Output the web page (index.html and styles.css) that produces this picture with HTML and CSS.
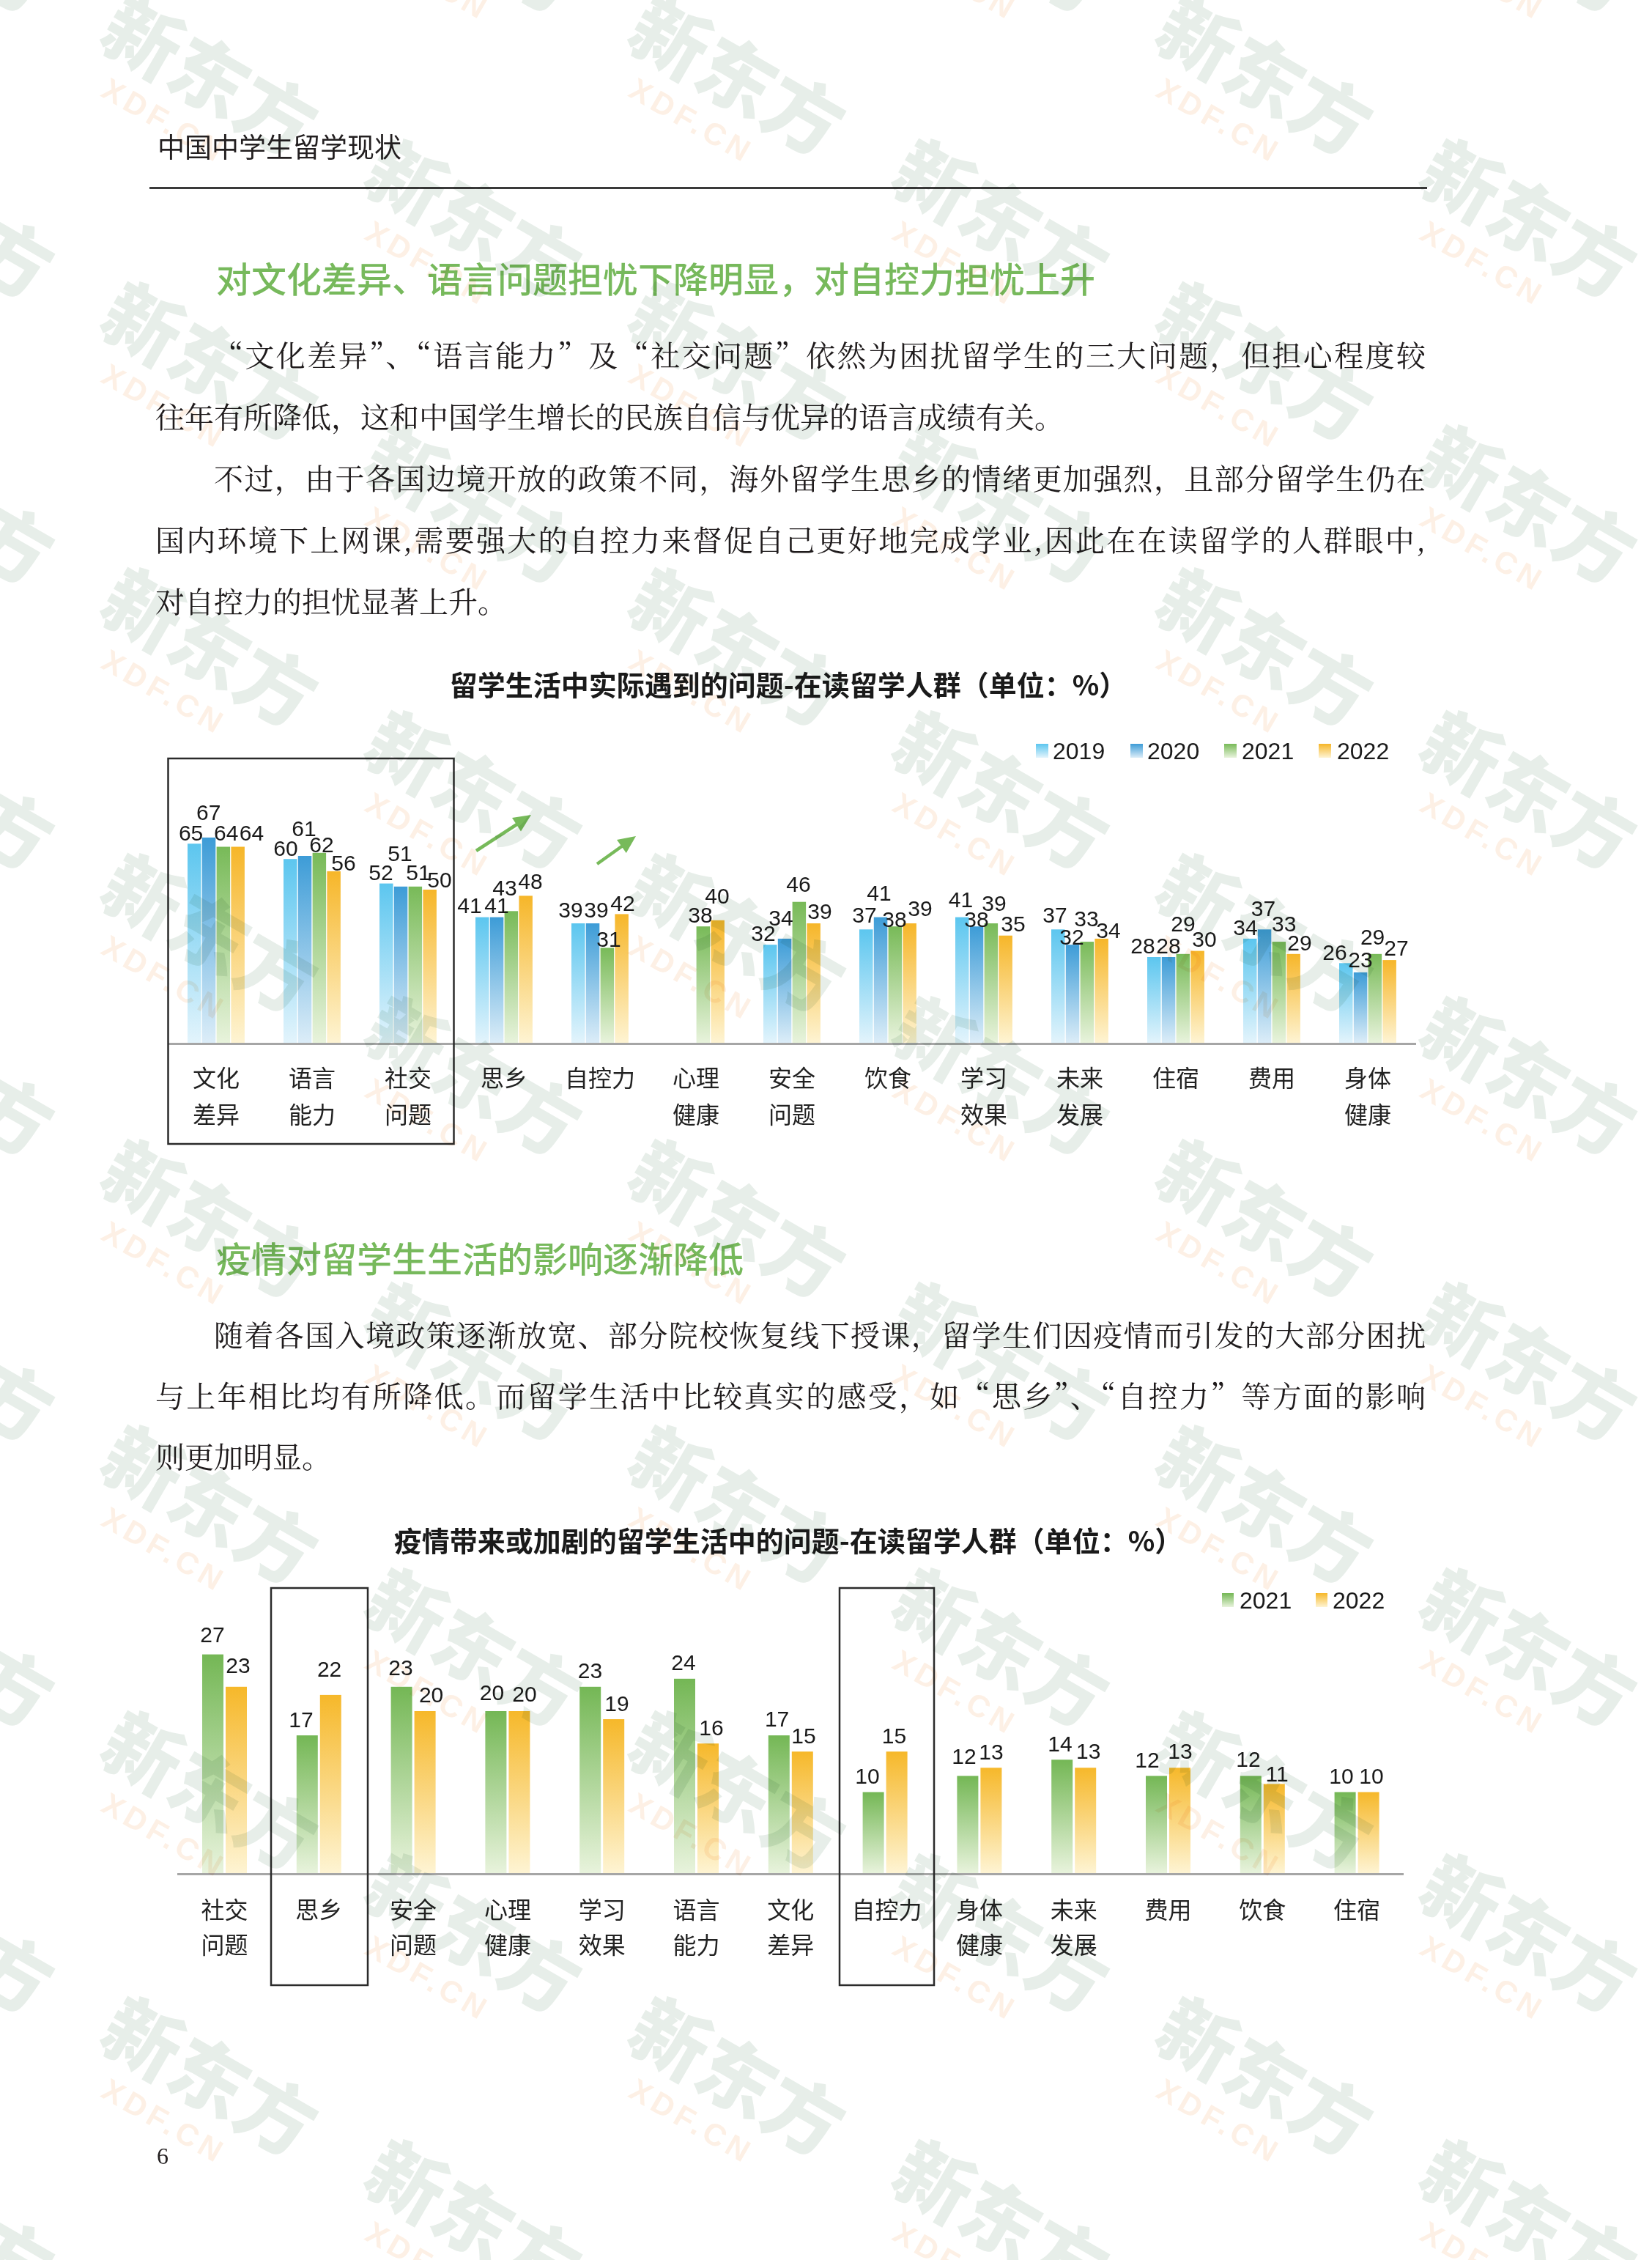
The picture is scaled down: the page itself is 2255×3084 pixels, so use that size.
FILE: index.html
```html
<!DOCTYPE html>
<html lang="zh-CN">
<head>
<meta charset="utf-8">
<title>中国中学生留学现状</title>
<link rel="stylesheet" href="styles.css">
</head>
<body>
<div class="page">
  <header class="running-head">中国中学生留学现状</header>
  <div class="rule"></div>

  <h2 class="sec-title">对文化差异、语言问题担忧下降明显，对自控力担忧上升</h2>
  <div class="para">
    <div class="ln first">“文化差异”、“语言能力”及“社交问题”依然为困扰留学生的三大问题，但担心程度较</div>
    <div class="ln last">往年有所降低，这和中国学生增长的民族自信与优异的语言成绩有关。</div>
  </div>
  <div class="para">
    <div class="ln first">不过，由于各国边境开放的政策不同，海外留学生思乡的情绪更加强烈，且部分留学生仍在</div>
    <div class="ln">国内环境下上网课,需要强大的自控力来督促自己更好地完成学业,因此在在读留学的人群眼中,</div>
    <div class="ln last">对自控力的担忧显著上升。</div>
  </div>

  <h3 class="chart-title">留学生活中实际遇到的问题-在读留学人群（单位：%）</h3>
  <svg class="chart" width="1740" height="580" viewBox="206 1000 1740 580">
    <defs>
      <linearGradient id="c19" x1="0" y1="0" x2="0" y2="1"><stop offset="0" stop-color="#5cc6ef"/><stop offset="1" stop-color="#e3f4fc"/></linearGradient>
      <linearGradient id="c20" x1="0" y1="0" x2="0" y2="1"><stop offset="0" stop-color="#3d9cd7"/><stop offset="1" stop-color="#dcedf8"/></linearGradient>
      <linearGradient id="c21" x1="0" y1="0" x2="0" y2="1"><stop offset="0" stop-color="#78ba58"/><stop offset="1" stop-color="#e8f3dc"/></linearGradient>
      <linearGradient id="c22" x1="0" y1="0" x2="0" y2="1"><stop offset="0" stop-color="#f6b629"/><stop offset="1" stop-color="#fef4d3"/></linearGradient>
    </defs>
    <!-- legend -->
    <rect x="1414" y="1014" width="17" height="19" fill="url(#c19)"/>
    <text class="leg" x="1437" y="1035">2019</text>
    <rect x="1543" y="1014" width="17" height="19" fill="url(#c20)"/>
    <text class="leg" x="1566" y="1035">2020</text>
    <rect x="1671" y="1014" width="17" height="19" fill="url(#c21)"/>
    <text class="leg" x="1695" y="1035">2021</text>
    <rect x="1800" y="1014" width="17" height="19" fill="url(#c22)"/>
    <text class="leg" x="1825" y="1035">2022</text>

    <!-- 2019 -->
    <g fill="url(#c19)">
      <rect x="256" y="1150.3" width="18.5" height="271.7"/>
      <rect x="387" y="1171.2" width="18.5" height="250.8"/>
      <rect x="518" y="1204.6" width="18.5" height="217.4"/>
      <rect x="649" y="1250.6" width="18.5" height="171.4"/>
      <rect x="780" y="1259" width="18.5" height="163"/>
      <rect x="1042" y="1288.2" width="18.5" height="133.8"/>
      <rect x="1173" y="1267.3" width="18.5" height="154.7"/>
      <rect x="1304" y="1250.6" width="18.5" height="171.4"/>
      <rect x="1435" y="1267.3" width="18.5" height="154.7"/>
      <rect x="1566" y="1305" width="18.5" height="117"/>
      <rect x="1697" y="1279.9" width="18.5" height="142.1"/>
      <rect x="1828" y="1313.3" width="18.5" height="108.7"/>
    </g>
    <!-- 2020 -->
    <g fill="url(#c20)">
      <rect x="275.8" y="1141.9" width="18.5" height="280.1"/>
      <rect x="406.8" y="1167" width="18.5" height="255"/>
      <rect x="537.8" y="1208.8" width="18.5" height="213.2"/>
      <rect x="668.8" y="1250.6" width="18.5" height="171.4"/>
      <rect x="799.8" y="1259" width="18.5" height="163"/>
      <rect x="1061.8" y="1279.9" width="18.5" height="142.1"/>
      <rect x="1192.8" y="1250.6" width="18.5" height="171.4"/>
      <rect x="1323.8" y="1263.2" width="18.5" height="158.8"/>
      <rect x="1454.8" y="1288.2" width="18.5" height="133.8"/>
      <rect x="1585.8" y="1305" width="18.5" height="117"/>
      <rect x="1716.8" y="1267.3" width="18.5" height="154.7"/>
      <rect x="1847.8" y="1325.9" width="18.5" height="96.1"/>
    </g>
    <!-- 2021 -->
    <g fill="url(#c21)">
      <rect x="295.6" y="1154.5" width="18.5" height="267.5"/>
      <rect x="426.6" y="1162.8" width="18.5" height="259.2"/>
      <rect x="557.6" y="1208.8" width="18.5" height="213.2"/>
      <rect x="688.6" y="1242.3" width="18.5" height="179.7"/>
      <rect x="819.6" y="1292.4" width="18.5" height="129.6"/>
      <rect x="950.6" y="1263.2" width="18.5" height="158.8"/>
      <rect x="1081.6" y="1229.7" width="18.5" height="192.3"/>
      <rect x="1212.6" y="1263.2" width="18.5" height="158.8"/>
      <rect x="1343.6" y="1259" width="18.5" height="163"/>
      <rect x="1474.6" y="1284.1" width="18.5" height="137.9"/>
      <rect x="1605.6" y="1300.8" width="18.5" height="121.2"/>
      <rect x="1736.6" y="1284.1" width="18.5" height="137.9"/>
      <rect x="1867.6" y="1300.8" width="18.5" height="121.2"/>
    </g>
    <!-- 2022 -->
    <g fill="url(#c22)">
      <rect x="315.4" y="1154.5" width="18.5" height="267.5"/>
      <rect x="446.4" y="1187.9" width="18.5" height="234.1"/>
      <rect x="577.4" y="1213" width="18.5" height="209"/>
      <rect x="708.4" y="1221.4" width="18.5" height="200.6"/>
      <rect x="839.4" y="1246.4" width="18.5" height="175.6"/>
      <rect x="970.4" y="1254.8" width="18.5" height="167.2"/>
      <rect x="1101.4" y="1259" width="18.5" height="163"/>
      <rect x="1232.4" y="1259" width="18.5" height="163"/>
      <rect x="1363.4" y="1275.7" width="18.5" height="146.3"/>
      <rect x="1494.4" y="1279.9" width="18.5" height="142.1"/>
      <rect x="1625.4" y="1296.6" width="18.5" height="125.4"/>
      <rect x="1756.4" y="1300.8" width="18.5" height="121.2"/>
      <rect x="1887.4" y="1309.1" width="18.5" height="112.9"/>
    </g>

    <line class="axis" x1="229" y1="1423.5" x2="1933" y2="1423.5"/>
    <rect class="frame" x="229.5" y="1034" width="390" height="526"/>

    <!-- arrows -->
    <g class="arrow">
      <line x1="650" y1="1160" x2="707" y2="1123"/>
      <polygon points="725,1111 711,1133.4 699,1115"/>
      <line x1="815" y1="1178" x2="850" y2="1153"/>
      <polygon points="868,1140 854.8,1162.9 842,1144.9"/>
    </g>

    <!-- data labels -->
    <g class="num">
      <text x="260.6" y="1146">65</text><text x="284.8" y="1118">67</text><text x="308.7" y="1146">64</text><text x="343.5" y="1146">64</text>
      <text x="390" y="1167">60</text><text x="415" y="1139.5">61</text><text x="439" y="1162">62</text><text x="469" y="1187">56</text>
      <text x="520" y="1199.6">52</text><text x="546" y="1174">51</text><text x="571" y="1199.6">51</text><text x="600" y="1210">50</text>
      <text x="641" y="1245">41</text><text x="678" y="1245">41</text><text x="689" y="1220.6">43</text><text x="724" y="1212">48</text>
      <text x="779" y="1250.5">39</text><text x="814" y="1250.5">39</text><text x="831" y="1291">31</text><text x="850" y="1241.7">42</text>
      <text x="956" y="1257.7">38</text><text x="979" y="1232">40</text>
      <text x="1042" y="1283">32</text><text x="1066" y="1261.6">34</text><text x="1090" y="1216">46</text><text x="1119" y="1253">39</text>
      <text x="1180" y="1257.7">37</text><text x="1200" y="1228">41</text><text x="1221" y="1263.5">38</text><text x="1256" y="1249">39</text>
      <text x="1311.5" y="1237">41</text><text x="1333" y="1263.5">38</text><text x="1357" y="1241.7">39</text><text x="1383" y="1270">35</text>
      <text x="1440" y="1257.7">37</text><text x="1463" y="1287.6">32</text><text x="1483" y="1262.7">33</text><text x="1513" y="1278.8">34</text>
      <text x="1560" y="1300">28</text><text x="1595" y="1300">28</text><text x="1615" y="1270">29</text><text x="1644" y="1291">30</text>
      <text x="1700" y="1275">34</text><text x="1724.5" y="1249">37</text><text x="1752.7" y="1270">33</text><text x="1774" y="1296">29</text>
      <text x="1822" y="1308.6">26</text><text x="1857" y="1319">23</text><text x="1873.6" y="1287.6">29</text><text x="1906" y="1303">27</text>
    </g>

    <!-- categories -->
    <g class="cat">
      <text x="295" y="1468">文化</text><text x="295" y="1518">差异</text>
      <text x="426" y="1468">语言</text><text x="426" y="1518">能力</text>
      <text x="557" y="1468">社交</text><text x="557" y="1518">问题</text>
      <text x="688" y="1468">思乡</text>
      <text x="819" y="1468">自控力</text>
      <text x="950" y="1468">心理</text><text x="950" y="1518">健康</text>
      <text x="1081" y="1468">安全</text><text x="1081" y="1518">问题</text>
      <text x="1212" y="1468">饮食</text>
      <text x="1343" y="1468">学习</text><text x="1343" y="1518">效果</text>
      <text x="1474" y="1468">未来</text><text x="1474" y="1518">发展</text>
      <text x="1605" y="1468">住宿</text>
      <text x="1736" y="1468">费用</text>
      <text x="1867" y="1468">身体</text><text x="1867" y="1518">健康</text>
    </g>
  </svg>

  <h2 class="sec-title second">疫情对留学生生活的影响逐渐降低</h2>
  <div class="para tight">
    <div class="ln first">随着各国入境政策逐渐放宽、部分院校恢复线下授课，留学生们因疫情而引发的大部分困扰</div>
    <div class="ln">与上年相比均有所降低。而留学生活中比较真实的感受，如“思乡”、“自控力”等方面的影响</div>
    <div class="ln last">则更加明显。</div>
  </div>

  <h3 class="chart-title second">疫情带来或加剧的留学生活中的问题-在读留学人群（单位：%）</h3>
  <svg class="chart chart2" width="1740" height="580" viewBox="206 2140 1740 580">
    <defs>
      <linearGradient id="d21" x1="0" y1="0" x2="0" y2="1"><stop offset="0" stop-color="#74b755"/><stop offset="1" stop-color="#e8f3dc"/></linearGradient>
      <linearGradient id="d22" x1="0" y1="0" x2="0" y2="1"><stop offset="0" stop-color="#f6b82a"/><stop offset="1" stop-color="#fef4d3"/></linearGradient>
    </defs>
    <rect x="1668" y="2173" width="16" height="19" fill="url(#d21)"/>
    <text class="leg" x="1692" y="2194">2021</text>
    <rect x="1796" y="2173" width="16" height="19" fill="url(#d22)"/>
    <text class="leg" x="1819" y="2194">2022</text>

    <g fill="url(#d21)">
      <rect x="276" y="2256.6" width="29" height="298.4"/>
      <rect x="404.8" y="2367.1" width="29" height="187.9"/>
      <rect x="533.6" y="2300.8" width="29" height="254.2"/>
      <rect x="662.4" y="2334" width="29" height="221"/>
      <rect x="791.2" y="2300.8" width="29" height="254.2"/>
      <rect x="920" y="2289.8" width="29" height="265.2"/>
      <rect x="1048.8" y="2367.1" width="29" height="187.9"/>
      <rect x="1177.6" y="2444.5" width="29" height="110.5"/>
      <rect x="1306.4" y="2422.4" width="29" height="132.6"/>
      <rect x="1435.2" y="2400.3" width="29" height="154.7"/>
      <rect x="1564" y="2422.4" width="29" height="132.6"/>
      <rect x="1692.8" y="2422.4" width="29" height="132.6"/>
      <rect x="1821.6" y="2444.5" width="29" height="110.5"/>
    </g>
    <g fill="url(#d22)">
      <rect x="308" y="2300.8" width="29" height="254.2"/>
      <rect x="436.8" y="2311.9" width="29" height="243.1"/>
      <rect x="565.6" y="2334" width="29" height="221"/>
      <rect x="694.4" y="2334" width="29" height="221"/>
      <rect x="823.2" y="2345" width="29" height="210"/>
      <rect x="952" y="2378.2" width="29" height="176.8"/>
      <rect x="1080.8" y="2389.2" width="29" height="165.8"/>
      <rect x="1209.6" y="2389.2" width="29" height="165.8"/>
      <rect x="1338.4" y="2411.3" width="29" height="143.7"/>
      <rect x="1467.2" y="2411.3" width="29" height="143.7"/>
      <rect x="1596" y="2411.3" width="29" height="143.7"/>
      <rect x="1724.8" y="2433.4" width="29" height="121.6"/>
      <rect x="1853.6" y="2444.5" width="29" height="110.5"/>
    </g>

    <line class="axis" x1="242" y1="2556.5" x2="1916" y2="2556.5"/>
    <rect class="frame" x="370" y="2166" width="132" height="542"/>
    <rect class="frame" x="1146" y="2166" width="129" height="542"/>

    <g class="num">
      <text x="290" y="2239.7">27</text><text x="325" y="2282">23</text>
      <text x="411" y="2356">17</text><text x="449.6" y="2286.5">22</text>
      <text x="547" y="2285">23</text><text x="588.6" y="2322">20</text>
      <text x="671.5" y="2319">20</text><text x="716" y="2321">20</text>
      <text x="805.5" y="2288.7">23</text><text x="842" y="2334">19</text>
      <text x="933" y="2278">24</text><text x="971" y="2366.7">16</text>
      <text x="1060.6" y="2355">17</text><text x="1097" y="2377.6">15</text>
      <text x="1184" y="2433">10</text><text x="1220.5" y="2377.6">15</text>
      <text x="1316" y="2405.8">12</text><text x="1353" y="2400">13</text>
      <text x="1447" y="2389">14</text><text x="1485.8" y="2399">13</text>
      <text x="1566" y="2411">12</text><text x="1611" y="2399">13</text>
      <text x="1704" y="2410">12</text><text x="1743" y="2429.6">11</text>
      <text x="1831" y="2433">10</text><text x="1872" y="2433">10</text>
    </g>

    <g class="cat">
      <text x="306.5" y="2603">社交</text><text x="306.5" y="2651">问题</text>
      <text x="435.3" y="2603">思乡</text>
      <text x="564.1" y="2603">安全</text><text x="564.1" y="2651">问题</text>
      <text x="692.9" y="2603">心理</text><text x="692.9" y="2651">健康</text>
      <text x="821.7" y="2603">学习</text><text x="821.7" y="2651">效果</text>
      <text x="950.5" y="2603">语言</text><text x="950.5" y="2651">能力</text>
      <text x="1079.3" y="2603">文化</text><text x="1079.3" y="2651">差异</text>
      <text x="1210.5" y="2603">自控力</text>
      <text x="1336.9" y="2603">身体</text><text x="1336.9" y="2651">健康</text>
      <text x="1465.7" y="2603">未来</text><text x="1465.7" y="2651">发展</text>
      <text x="1594.5" y="2603">费用</text>
      <text x="1723.3" y="2603">饮食</text>
      <text x="1852.1" y="2603">住宿</text>
    </g>
  </svg>

  <div class="folio">6</div>
</div>

<svg class="wm" width="2255" height="3084" viewBox="0 0 2255 3084" aria-hidden="true">
  <defs>
    <g id="wmark">
      <g transform="rotate(30)">
        <text class="wm-cn" x="0" y="0">新东方</text>
        <text class="wm-en" x="40" y="58">XDF.CN</text>
      </g>
    </g>
    <pattern id="wmp" patternUnits="userSpaceOnUse" x="110" y="-30" width="720" height="390">
      <use href="#wmark" x="20" y="90"/>
      <use href="#wmark" x="380" y="285"/>
      <use href="#wmark" x="380" y="-105"/>
    </pattern>
  </defs>
  <rect width="2255" height="3084" fill="url(#wmp)"/>
</svg>
</body>
</html>
```

FILE: styles.css
```css
html, body {
  margin: 0;
  padding: 0;
  background: #ffffff;
}

body {
  position: relative;
  width: 2255px;
  min-height: 3084px;
  color: #231f20;
  font-family: "Noto Sans CJK SC", "Noto Sans", sans-serif;
}

.page {
  width: 1740px;
  margin-left: 206px;
  padding-top: 174px;
}

.running-head {
  font-family: "Noto Sans CJK SC", sans-serif;
  font-size: 37px;
  line-height: 50px;
  height: 50px;
  padding-left: 9px;
  color: #231f20;
}

.rule {
  margin-top: 31px;
  margin-left: -2px;
  width: 1744px;
  height: 3px;
  background: #3a3a3a;
}

.sec-title {
  margin: 88px 0 0 0;
  padding-left: 89px;
  font-family: "Noto Sans CJK SC", sans-serif;
  font-size: 48px;
  line-height: 64px;
  font-weight: 500;
  color: #77b95c;
}

.sec-title.second {
  margin-top: 102px;
}

.para {
  margin-top: 31px;
  font-family: "Noto Serif CJK SC", "Noto Sans CJK SC", serif;
  font-size: 40px;
  line-height: 84px;
  color: #1f1b1c;
}

.para + .para {
  margin-top: 0;
}

.para.tight {
  line-height: 83px;
}

.ln {
  padding-left: 6px;
  white-space: nowrap;
  text-align: justify;
  text-align-last: justify;
  text-justify: inter-character;
}

.ln.first {
  text-indent: 2em;
}

.ln.last {
  text-align-last: left;
}

.chart-title {
  margin: 47px 0 0 0;
  text-align: center;
  font-family: "Noto Sans CJK SC", sans-serif;
  font-size: 38px;
  line-height: 50px;
  font-weight: 700;
  color: #1a1a1a;
}

.chart-title.second {
  margin-top: 49px;
}

.chart {
  display: block;
  margin-top: 43px;
}

.chart.chart2 {
  margin-top: 15px;
}

.axis {
  stroke: #a6a6a6;
  stroke-width: 3;
}

.frame {
  fill: none;
  stroke: #2b2b2b;
  stroke-width: 2.5;
}

.arrow line {
  stroke: #77ba5a;
  stroke-width: 4.5;
}

.arrow polygon {
  fill: #77ba5a;
}

.num text {
  font-family: "Liberation Sans", Arial, sans-serif;
  font-size: 30px;
  fill: #1a1a1a;
  text-anchor: middle;
}

.cat text {
  font-family: "Noto Sans CJK SC", sans-serif;
  font-size: 32px;
  fill: #222222;
  text-anchor: middle;
  dominant-baseline: central;
}

.leg {
  font-family: "Liberation Sans", Arial, sans-serif;
  font-size: 32px;
  fill: #1a1a1a;
}

.folio {
  margin-top: 201px;
  padding-left: 8px;
  font-family: "Liberation Serif", serif;
  font-size: 32px;
  line-height: 40px;
  color: #231f20;
}

.wm {
  position: absolute;
  left: 0;
  top: 0;
  pointer-events: none;
  mix-blend-mode: multiply;
}

.wm-cn {
  font-family: "Noto Sans CJK SC", sans-serif;
  font-weight: 900;
  font-size: 105px;
  fill: #e7eee9;
}

.wm-en {
  font-family: "Liberation Sans", Arial, sans-serif;
  font-weight: 700;
  font-size: 42px;
  letter-spacing: 6px;
  fill: #fdf0e5;
}
```
